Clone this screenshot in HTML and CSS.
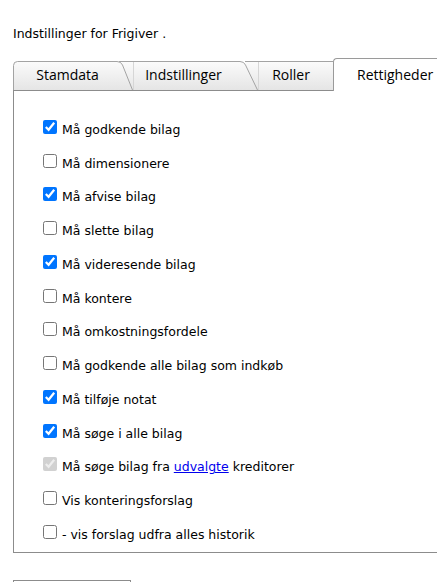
FILE: index.html
```html
<!DOCTYPE html>
<html lang="da">
<head>
<meta charset="utf-8">
<title>Indstillinger</title>
<link rel="stylesheet" href="styles.css">
</head>
<body>
<div class="page">
  <div class="title">Indstillinger for Frigiver .</div>
  <div class="tabs">
    <div class="tab tab-1">
      <svg class="tab-shape" width="120" height="29" viewBox="0 0 120 29">
        <defs>
          <linearGradient id="tg" x1="0" y1="0" x2="0" y2="1">
            <stop offset="0" stop-color="#fbfbfb"/>
            <stop offset="1" stop-color="#e5e5e5"/>
          </linearGradient>
        </defs>
        <path d="M0.5,29 V4.5 Q0.5,0.5 4.5,0.5 H104 Q108,0.5 109.5,4 L119.5,29 Z" fill="url(#tg)"/>
        <path d="M0.5,29 V4.5 Q0.5,0.5 4.5,0.5 H104 Q108,0.5 109.5,4 L119.5,29" fill="none" stroke="#a3a3a3"/>
      </svg>
      <span class="tab-label w109">Stamdata</span>
    </div>
    <div class="tab tab-2">
      <svg class="tab-shape" width="139" height="29" viewBox="0 0 139 29">
        <path d="M0,0.5 H121 Q125,0.5 126.5,4 L138.5,29 H0 Z" fill="url(#tg)"/>
        <path d="M0,0.5 H121 Q125,0.5 126.5,4 L138.5,29" fill="none" stroke="#a3a3a3"/>
        <path d="M14.5,1 V29" stroke="#d6d6d6"/>
      </svg>
      <span class="tab-label w129">Indstillinger</span>
    </div>
    <div class="tab tab-3">
      <svg class="tab-shape" width="88" height="29" viewBox="0 0 88 29">
        <path d="M0,0.5 H88 V29 H0 Z" fill="url(#tg)"/>
        <path d="M0,0.5 H88" fill="none" stroke="#a3a3a3"/>
        <path d="M13.5,1 V29" stroke="#d6d6d6"/>
      </svg>
      <span class="tab-label w92">Roller</span>
    </div>
    <div class="tab tab-active">
      <span class="tab-label-active">Rettigheder</span>
    </div>
  </div>
  <div class="panel">
    <div class="row"><label><input type="checkbox" checked> Må godkende bilag</label></div>
    <div class="row"><label><input type="checkbox"> Må dimensionere</label></div>
    <div class="row"><label><input type="checkbox" checked> Må afvise bilag</label></div>
    <div class="row"><label><input type="checkbox"> Må slette bilag</label></div>
    <div class="row"><label><input type="checkbox" checked> Må videresende bilag</label></div>
    <div class="row"><label><input type="checkbox"> Må kontere</label></div>
    <div class="row"><label><input type="checkbox"> Må omkostningsfordele</label></div>
    <div class="row"><label><input type="checkbox"> Må godkende alle bilag som indkøb</label></div>
    <div class="row"><label><input type="checkbox" checked> Må tilføje notat</label></div>
    <div class="row"><label><input type="checkbox" checked> Må søge i alle bilag</label></div>
    <div class="row"><label><input type="checkbox" checked disabled> Må søge bilag fra <a href="#">udvalgte</a> kreditorer</label></div>
    <div class="row"><label><input type="checkbox"> Vis konteringsforslag</label></div>
    <div class="row"><label><input type="checkbox"> - vis forslag udfra alles historik</label></div>
  </div>
  <div class="next-box"></div>
</div>
</body>
</html>
```
FILE: styles.css
```css
html, body {
  margin: 0;
  padding: 0;
  overflow: hidden;
  background: #ffffff;
}

.page {
  padding-left: 13px;
  width: 470px;
  font-family: "DejaVu Sans", Verdana, sans-serif;
  font-size: 12.5px;
  color: #000000;
}

.title {
  margin-top: 26px;
  line-height: 16px;
  height: 16px;
}

.tabs {
  margin-top: 16px;
  height: 32px;
  display: flex;
  align-items: flex-end;
  font-family: "Open Sans", "Noto Sans", sans-serif;
  font-size: 14px;
}

.tab {
  position: relative;
  height: 29px;
  flex: none;
}

.tab-shape {
  position: absolute;
  left: 0;
  top: 0;
  display: block;
}

.tab-label {
  position: relative;
  display: block;
  text-align: center;
  line-height: 28px;
}

.w109 { width: 109px; }
.w129 { width: 129px; }
.w92 { width: 92px; }

.tab-1 {
  width: 120px;
  z-index: 3;
}

.tab-2 {
  width: 139px;
  margin-left: -14px;
  z-index: 2;
}

.tab-3 {
  width: 88px;
  margin-left: -13px;
  z-index: 1;
}

.tab-active {
  width: 140px;
  height: 33px;
  margin-bottom: -1px;
  box-sizing: border-box;
  background: #ffffff;
  border-left: 1px solid #9a9a9a;
  border-top: 1px solid #9a9a9a;
  border-top-left-radius: 4px;
  z-index: 4;
  padding-left: 23px;
}

.tab-label-active {
  display: block;
  line-height: 31px;
}

.panel {
  border: 1px solid #8c8c8c;
  width: 470px;
  padding: 19px 0 3px 25px;
  box-sizing: border-box;
}

.row {
  height: 33.75px;
  display: flex;
  align-items: center;
}

.row label {
  display: block;
  line-height: 16px;
  padding-top: 1px;
}

.row input {
  width: 14px;
  height: 14px;
  margin: 3px 1px 1px 4px;
}

.row a {
  color: #0000ee;
  text-decoration: underline;
}

.next-box {
  margin-top: 27px;
  width: 118px;
  height: 22px;
  box-sizing: border-box;
  border: 1px solid #8c8c8c;
}
```
